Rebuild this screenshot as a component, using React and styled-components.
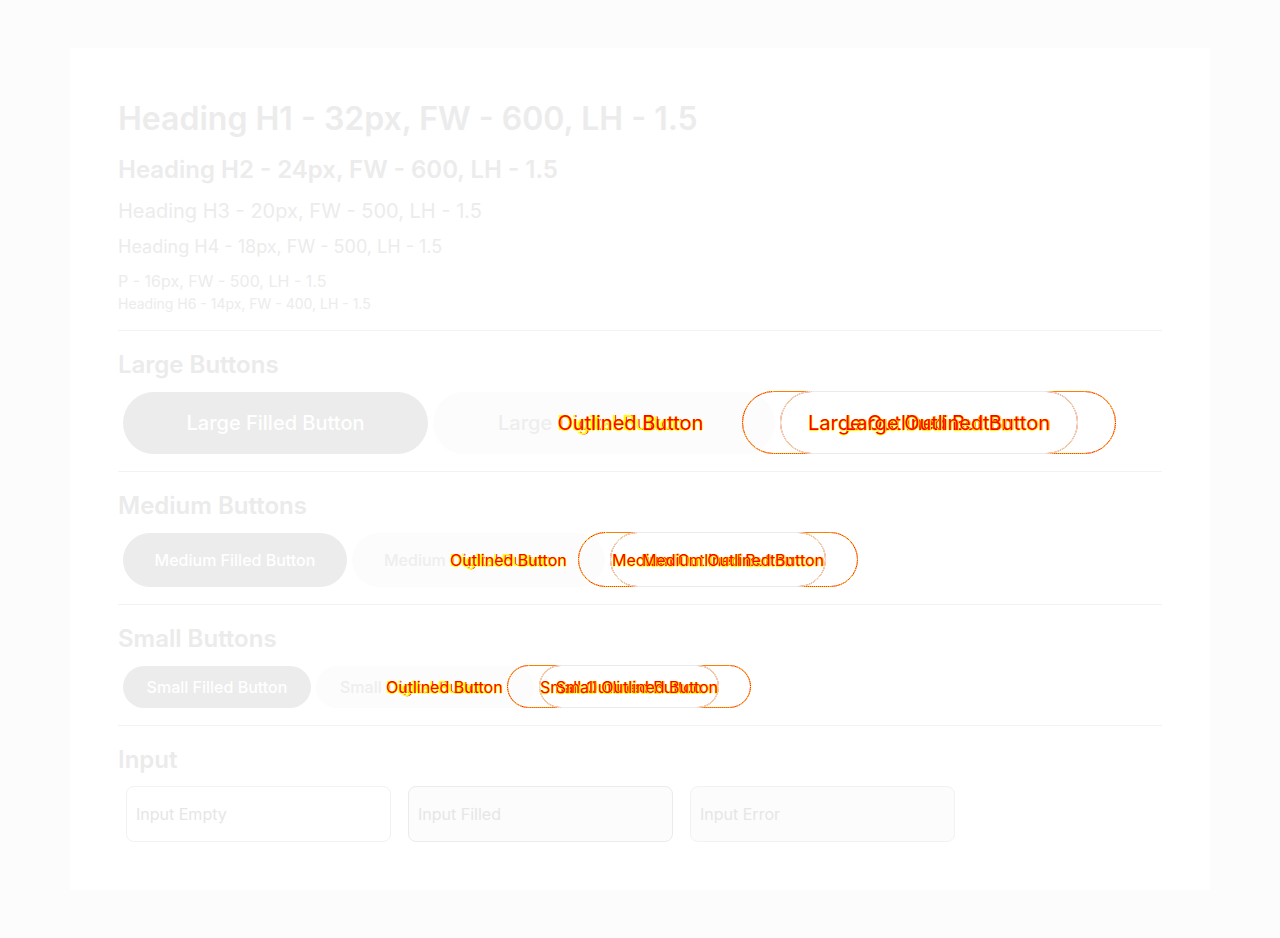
import React from 'react';
import styled, { createGlobalStyle } from 'styled-components';

const GlobalStyle = createGlobalStyle`
  html, body {
    margin: 0;
    padding: 0;
    background: #fcfcfc;
    font-family: Inter, "Noto Sans", "Liberation Sans", sans-serif;
  }
`;

const sizes = {
  large: { height: 62, font: 20, filled: 305, light: 342, lightPad: 65, outlined: 298, ghost: 38, pad: 27 },
  medium: { height: 54, font: 16, filled: 224, light: 253, lightPad: 32, outlined: 216, ghost: 32, pad: 1 },
  small: { height: 42, font: 16, filled: 188, light: 218, lightPad: 24, outlined: 180, ghost: 32, pad: 0 }
};

const Page = styled.div`
  padding: 48px 70px;
  min-height: 938px;
  box-sizing: border-box;
`;

const Card = styled.div`
  background: #ffffff;
  height: 842px;
  box-sizing: border-box;
  padding: 47px 48px;
  color: #ececec;
`;

const H = styled.div`
  font-size: ${p => p.size}px;
  font-weight: ${p => p.weight};
  line-height: 1.5;
  margin-bottom: ${p => p.mb || 0}px;
  color: ${p => p.color || '#ececec'};
  white-space: nowrap;
`;

const Section = styled.section`
  border-top: 1px solid #f2f2f2;
  padding: 16px 0 17px;
`;

const SectionTitle = styled.h2`
  margin: 0 0 8px;
  font-size: 24px;
  font-weight: 600;
  line-height: 1.5;
  color: #ebebeb;
`;

const Row = styled.div`
  display: flex;
  align-items: center;
  gap: 5px;
  padding-left: 5px;
`;

const Pill = styled.div`
  box-sizing: border-box;
  height: ${p => sizes[p.size].height}px;
  border-radius: 999px;
  font-size: ${p => sizes[p.size].font}px;
  font-weight: 500;
  display: flex;
  align-items: center;
  white-space: nowrap;
`;

const FilledButton = styled(Pill)`
  width: ${p => sizes[p.size].filled}px;
  background: #ececec;
  color: #ffffff;
  justify-content: center;
`;

const LightButton = styled(Pill)`
  width: ${p => sizes[p.size].light}px;
  background: #fcfcfc;
  color: #eeeeee;
  padding-left: ${p => sizes[p.size].lightPad}px;
`;

const Stack = styled.span`
  display: inline-grid;
  & > * {
    grid-area: 1 / 1;
  }
`;

const Glitch = styled.span`
  color: ${p => (p.yellow ? '#ffff00' : '#ff0000')};
  text-shadow: ${p => (p.yellow ? '1px 0 #ff0000' : '1px 0 #ffff00, 0 1px #ffff00')};
  justify-self: ${p => p.align || 'start'};
  font-weight: 400;
`;

const OutlineStack = styled.div`
  display: grid;
  grid-template-columns: minmax(0, 1fr);
  width: ${p => sizes[p.size].outlined}px;
  height: ${p => sizes[p.size].height + 1}px;
  & > * {
    grid-area: 1 / 1;
  }
`;

const Ghost = styled.div`
  box-sizing: border-box;
  width: ${p => sizes[p.size].outlined + sizes[p.size].ghost}px;
  margin-left: ${p => (p.left ? -sizes[p.size].ghost : 0)}px;
  border-radius: 999px;
  border: 1px solid #ff0000;
  outline: 1px dotted #ffff00;
  outline-offset: -1px;
`;

const OutlinedButton = styled(Pill)`
  height: 100%;
  min-width: 0;
  border: 1px solid #ebebeb;
  padding: 0 ${p => sizes[p.size].pad}px;
`;

const OutlinedText = styled.span`
  flex: 1;
  min-width: 0;
  display: grid;
  grid-template-columns: minmax(0, 1fr);
  & > * {
    grid-area: 1 / 1;
  }
`;

const InputRow = styled.div`
  display: flex;
  gap: 17px;
  padding-left: 8px;
`;

const Input = styled.div`
  box-sizing: border-box;
  width: 265px;
  height: 56px;
  border-radius: 8px;
  border: 1px solid ${p => (p.variant === 'filled' ? '#ebebeb' : '#f2f2f2')};
  background: ${p => (p.variant === 'empty' ? '#ffffff' : '#fcfcfc')};
  color: #e6e6e6;
  font-size: 16px;
  display: flex;
  align-items: center;
  padding-left: 9px;
`;

const buttonRows = [
  { key: 'large', title: 'Large Buttons', label: 'Large' },
  { key: 'medium', title: 'Medium Buttons', label: 'Medium' },
  { key: 'small', title: 'Small Buttons', label: 'Small' }
];

function ButtonRow({ size, label }) {
  return (
    <Row>
      <FilledButton size={size}>{label} Filled Button</FilledButton>
      <LightButton size={size}>
        <span>{label}&nbsp;</span>
        <Stack>
          <Glitch yellow>Digital Button</Glitch>
          <Glitch>Outlined Button</Glitch>
        </Stack>
      </LightButton>
      <OutlineStack size={size}>
        <Ghost size={size} left />
        <Ghost size={size} />
        <OutlinedButton size={size}>
          <OutlinedText>
            <Glitch align="start">{label} Outlined Button</Glitch>
            <Glitch align="end" yellow>{label} Outlined Button</Glitch>
            <Glitch align="end">{label} Outlined Button</Glitch>
          </OutlinedText>
        </OutlinedButton>
      </OutlineStack>
    </Row>
  );
}

export default function App() {
  return (
    <Page>
      <GlobalStyle />
      <Card>
        <H size={32} weight={600} mb={9}>Heading H1 - 32px, FW - 600, LH - 1.5</H>
        <H size={24} weight={600} mb={8}>Heading H2 - 24px, FW - 600, LH - 1.5</H>
        <H size={20} weight={400} mb={7}>Heading H3 - 20px, FW - 500, LH - 1.5</H>
        <H size={18} weight={400} mb={9}>Heading H4 - 18px, FW - 500, LH - 1.5</H>
        <H size={16} weight={400}>P - 16px, FW - 500, LH - 1.5</H>
        <H size={14} weight={400} mb={16}>Heading H6 - 14px, FW - 400, LH - 1.5</H>

        {buttonRows.map(r => (
          <Section key={r.key}>
            <SectionTitle>{r.title}</SectionTitle>
            <ButtonRow size={r.key} label={r.label} />
          </Section>
        ))}

        <Section>
          <SectionTitle>Input</SectionTitle>
          <InputRow>
            <Input variant="empty">Input Empty</Input>
            <Input variant="filled">Input Filled</Input>
            <Input variant="error">Input Error</Input>
          </InputRow>
        </Section>
      </Card>
    </Page>
  );
}
